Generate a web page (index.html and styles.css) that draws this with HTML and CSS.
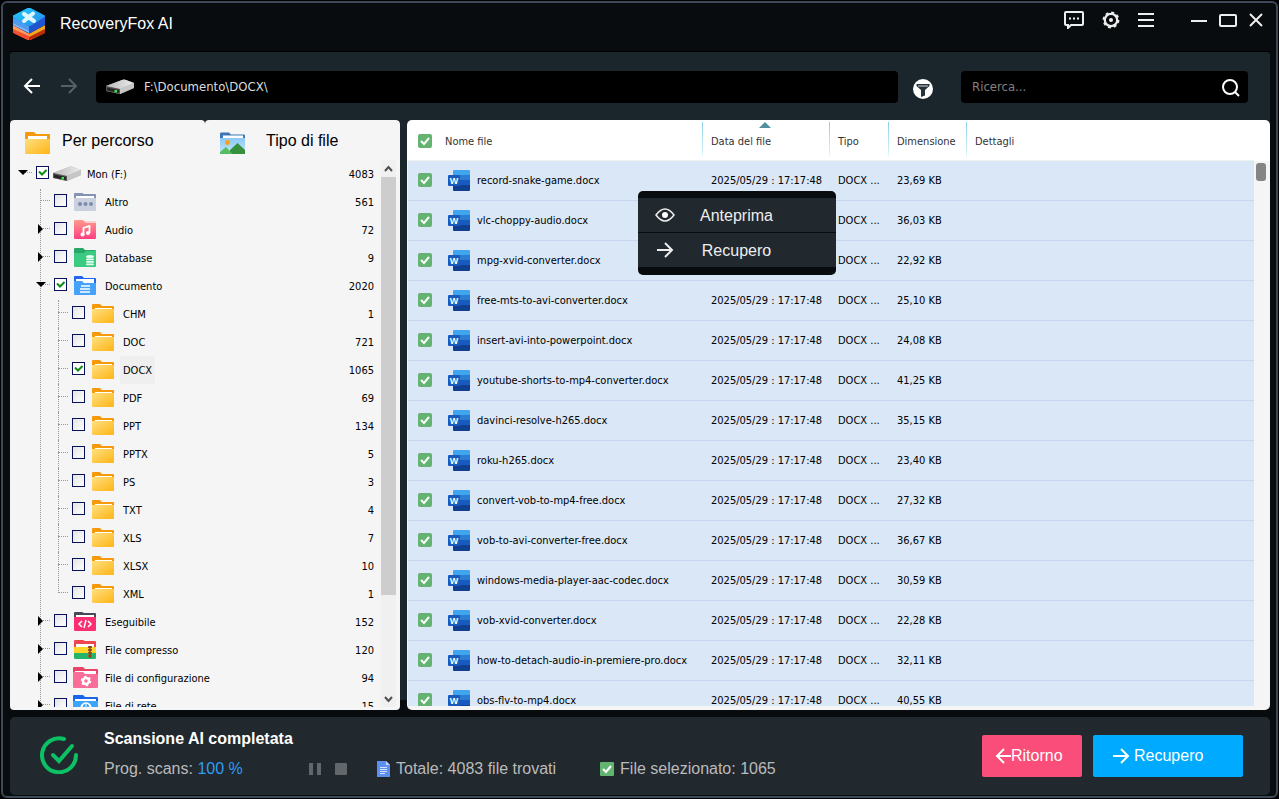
FILE: index.html
```
<!DOCTYPE html>
<html lang="it">
<head>
    <meta charset="UTF-8">
    <title>RecoveryFox AI</title>
    <link rel="stylesheet" href="styles.css">
</head>
<body>
    <svg class="sprite" aria-hidden="true">
        <defs>
            <linearGradient id="gold" x1="0" y1="0" x2="1" y2="1">
                <stop offset="0" stop-color="#ffdf80"/>
                <stop offset="1" stop-color="#fdb515"/>
            </linearGradient>
            <linearGradient id="pink" x1="0" y1="0" x2="0" y2="1">
                <stop offset="0" stop-color="#ff9a8b"/>
                <stop offset="1" stop-color="#ff3f84"/>
            </linearGradient>
            <linearGradient id="sky" x1="0" y1="0" x2="0" y2="1">
                <stop offset="0" stop-color="#8cc8f5"/>
                <stop offset="1" stop-color="#c4e8fb"/>
            </linearGradient>
            <linearGradient id="metal" x1="0" y1="0" x2="1" y2="0">
                <stop offset="0" stop-color="#b9b9b9"/>
                <stop offset="1" stop-color="#ececec"/>
            </linearGradient>
            <linearGradient id="cyan" x1="0" y1="0" x2="1" y2="1">
                <stop offset="0" stop-color="#1fd0ff"/>
                <stop offset="1" stop-color="#2a86e8"/>
            </linearGradient>
        </defs>
        <symbol id="folder" viewBox="0 0 22 20">
            <path d="M0 2Q0 1 1 1h7l2 2h11q1 0 1 1v4H0z" fill="#f59a0b"/>
            <path d="M3 5h17v3H3z" fill="#fff"/>
            <path d="M0 6h22v13q0 1-1 1H1q-1 0-1-1z" fill="url(#gold)"/>
        </symbol>
        <symbol id="folder-other" viewBox="0 0 22 20">
            <path d="M0 3Q0 2 1 2h7l2 1h11q1 0 1 1v4H0z" fill="#8492b4"/>
            <path d="M2 5h18v3H2z" fill="#fff"/>
            <path d="M0 7h22v12q0 1-1 1H1q-1 0-1-1z" fill="#cbd0df"/>
            <g fill="#7d8bb0"><circle cx="6" cy="13" r="2"/><circle cx="11.500" cy="13" r="2"/><circle cx="17" cy="13" r="2"/></g>
        </symbol>
        <symbol id="folder-audio" viewBox="0 0 22 20">
            <path d="M10 2h11q1 0 1 1v4H10z" fill="#ffd0cf"/>
            <path d="M0 2Q0 1 1 1h8l3 3h10v15q0 1-1 1H1q-1 0-1-1z" fill="url(#pink)"/>
            <path d="M9.500 16V9l6-2v7" fill="none" stroke="#fff" stroke-width="1.800"/>
            <circle cx="8.500" cy="15.500" r="2" fill="#fff"/><circle cx="14" cy="14" r="2" fill="#fff"/>
        </symbol>
        <symbol id="folder-database" viewBox="0 0 22 20">
            <path d="M0 2Q0 1 1 1h8l2 2h10q1 0 1 1v5H0z" fill="#27a768"/>
            <path d="M0 6h10l2-2h10v15q0 1-1 1H1q-1 0-1-1z" fill="#3bca82"/>
            <g fill="#e9fff3"><ellipse cx="16" cy="9.500" rx="4" ry="1.600"/><rect x="12" y="11.500" width="8" height="1.700" rx="1"/><rect x="12" y="14" width="8" height="1.700" rx="1"/><rect x="12" y="16.500" width="8" height="1.700" rx="1"/></g>
        </symbol>
        <symbol id="folder-document" viewBox="0 0 22 20">
            <path d="M0 2Q0 1 1 1h7l2 2h11q1 0 1 1v5H0z" fill="#2166f2"/>
            <path d="M2 4h18v4H2z" fill="#fff"/>
            <path d="M0 6h8l2 2h12v11q0 1-1 1H1q-1 0-1-1z" fill="#45a2fc"/>
            <path d="M7 11h9M6 14h10M6 17h10" stroke="#fff" stroke-width="1.500"/>
        </symbol>
        <symbol id="folder-exe" viewBox="0 0 22 20">
            <path d="M0 2Q0 1 1 1h7l2 1h11q1 0 1 1v5H0z" fill="#454a58"/>
            <path d="M2 4h18v4H2z" fill="#fff"/>
            <path d="M0 6h22v13q0 1-1 1H1q-1 0-1-1z" fill="#fb2f72"/>
            <path d="M8 10l-3 3 3 3M14 10l3 3-3 3M12 9l-2 8" fill="none" stroke="#fff" stroke-width="1.500"/>
        </symbol>
        <symbol id="folder-zip" viewBox="0 0 22 20">
            <path d="M0 2Q0 1 1 1h8l2 1h10q1 0 1 1v5H0z" fill="#f0444e"/>
            <path d="M2 5h18v4H2z" fill="#fff"/>
            <path d="M0 8h22v6H0z" fill="#ffd52b"/>
            <path d="M0 14h22v5q0 1-1 1H1q-1 0-1-1z" fill="#27b36b"/>
            <path d="M16 7v12" stroke="#a45a25" stroke-width="4" stroke-dasharray="2 1"/>
            <path d="M16 7v12" stroke="#7b4520" stroke-width="1.500"/>
        </symbol>
        <symbol id="folder-config" viewBox="0 0 25 22">
            <path d="M0 2Q0 1 1 1h9l2 2h12q1 0 1 1v5H0z" fill="#e94369"/>
            <path d="M2 5h21v5H2z" fill="#fff"/>
            <path d="M0 6h10l2 2h13v13q0 1-1 1H1q-1 0-1-1z" fill="#fa6d98"/>
            <circle cx="13" cy="15" r="3" fill="none" stroke="#fff" stroke-width="2.500"/>
            <circle cx="13" cy="15" r="4.500" fill="none" stroke="#fff" stroke-width="1.500" stroke-dasharray="2.300 2.400"/>
        </symbol>
        <symbol id="folder-net" viewBox="0 0 25 22">
            <path d="M0 2Q0 1 1 1h9l2 2h12q1 0 1 1v5H0z" fill="#1765e9"/>
            <path d="M2 5h21v4H2z" fill="#fff"/>
            <path d="M0 7h25v14q0 1-1 1H1q-1 0-1-1z" fill="#3aa5fb"/>
            <circle cx="13" cy="14" r="5" fill="none" stroke="#fff" stroke-width="1.500"/>
            <path d="M8 14h10M13 9v10M10 10q-2 4 0 8M16 10q2 4 0 8" fill="none" stroke="#fff"/>
        </symbol>
        <symbol id="folder-image" viewBox="0 0 25 22">
            <path d="M0 1.500Q0 .500 1 .500h8l2 2h13q1 0 1 1v4H0z" fill="#3d78b4"/>
            <path d="M3 3.500h20v3H3z" fill="#fff"/>
            <path d="M0 6h25v15q0 1-1 1H1q-1 0-1-1z" fill="url(#sky)"/>
            <path d="M10 18l7.500-7L25 18v4H10z" fill="#36903e"/>
            <path d="M0 20l6-5 6.500 7H0z" fill="#58bd60"/>
            <circle cx="7.500" cy="10.500" r="2.500" fill="#fba11b"/>
        </symbol>
        <symbol id="drive" viewBox="0 0 30 16">
            <path d="M1 7L17 1q2-1 4 0l8 3v5l-14 6L1 12z" fill="#a5a5a5"/>
            <path d="M1 7L17 1q2-1 4 0l8 3-14 6z" fill="url(#metal)"/>
            <path d="M15 10l14-6v5l-14 6z" fill="#c6c6c6"/>
            <path d="M1 7l14 3v5L1 12z" fill="#555"/>
            <path d="M2 8.500l12 2.500v3L2 11.500z" fill="#262626"/>
            <path d="M9.500 11h2.500v2.500H9.500z" fill="#3ce54b"/>
        </symbol>
        <symbol id="word" viewBox="0 0 22 21">
            <path d="M5 1q0-1 1-1h15q1 0 1 1v5H5z" fill="#41a5ee"/>
            <path d="M5 5h17v6H5z" fill="#2b7cd3"/>
            <path d="M5 10h17v6H5z" fill="#185abd"/>
            <path d="M5 15h17v5q0 1-1 1H6q-1 0-1-1z" fill="#103f91"/>
            <rect y="5" width="12" height="11" rx="1" fill="#185abd"/>
            <text x="6" y="14" class="word-letter">W</text>
        </symbol>
        <symbol id="arrow-left" viewBox="0 0 18 18">
            <path d="M17 9H2M9 2L2 9l7 7" fill="none" stroke="currentColor" stroke-width="2"/>
        </symbol>
        <symbol id="arrow-right" viewBox="0 0 18 18">
            <path d="M1 9h15M9 2l7 7-7 7" fill="none" stroke="currentColor" stroke-width="2"/>
        </symbol>
    </svg>

    <div class="window">
        <header class="titlebar">
            <svg class="logo" viewBox="0 0 32 32">
                <path d="M0 18l16 7 16-7v6q0 1-1 1.500L17.500 32h-3L1 25.500Q0 25 0 24z" fill="#f4502e"/>
                <path d="M16 25l16-7v6q0 1-1 1.500L17.500 32H16z" fill="#b92d08"/>
                <path d="M0 17l16 9v2L0 21z" fill="#ff9d62"/>
                <path d="M16 26l16-9v4l-16 8z" fill="#f4a81f"/>
                <path d="M0 8l16 8 16-8v8q0 1-1 1.500L17.500 25h-3L1 17.500Q0 17 0 16z" fill="#1f55cf"/>
                <path d="M0 9l16 9v5L0 15z" fill="#4e9bf2"/>
                <path d="M0 15l16 8v2L1 17.500Q0 17 0 16z" fill="#86bdf8"/>
                <path d="M14.500 0h3L31 7q1 .500 1 1t-1 1.500L17.500 18h-3L1 9.500Q0 9 0 8t1-1z" fill="url(#cyan)"/>
                <path d="M11 6l10 7M20 5.500L11 13" stroke="#dff6ff" stroke-width="4" stroke-linecap="round"/>
            </svg>
            <h1>RecoveryFox AI</h1>
            <div class="tools">
                <button aria-label="Messaggi"><svg width="20" height="18" viewBox="0 0 20 18"><path d="M2 1h16q1 0 1 1v11q0 1-1 1H7l-3 3v-3H2q-1 0-1-1V2q0-1 1-1z" fill="none" stroke="#eee" stroke-width="2"/><path d="M5 7.500h2M9 7.500h2M13 7.500h2" stroke="#eee" stroke-width="2"/></svg></button>
                <button aria-label="Impostazioni"><svg width="18" height="18" viewBox="0 0 18 18"><circle cx="9" cy="9" r="6.200" fill="none" stroke="#eee" stroke-width="2.200"/><circle cx="9" cy="9" r="7.600" fill="none" stroke="#eee" stroke-width="1.600" stroke-dasharray="3 2.970"/><circle cx="9" cy="9" r="2" fill="#eee"/></svg></button>
                <button aria-label="Menu"><svg width="16" height="14" viewBox="0 0 16 14"><path d="M0 1h16M0 7h16M0 13h16" stroke="#eee" stroke-width="2"/></svg></button>
            </div>
            <div class="controls">
                <button aria-label="Riduci"><svg width="16" height="14" viewBox="0 0 16 14"><path d="M0 8h16" stroke="#eee" stroke-width="2"/></svg></button>
                <button aria-label="Ingrandisci"><svg width="18" height="14" viewBox="0 0 18 14"><rect x="1" y="2" width="16" height="11" rx="1" fill="none" stroke="#eee" stroke-width="2"/></svg></button>
                <button aria-label="Chiudi"><svg width="14" height="14" viewBox="0 0 14 14"><path d="M1 1l12 12M13 1L1 13" stroke="#eee" stroke-width="2"/></svg></button>
            </div>
        </header>

        <main class="workspace">
            <div class="toolbar">
                <button class="nav" aria-label="Indietro"><svg width="18" height="18"><use href="#arrow-left"/></svg></button>
                <button class="nav" aria-label="Avanti" disabled><svg width="18" height="18"><use href="#arrow-right"/></svg></button>
                <label class="field path">
                    <svg width="30" height="16"><use href="#drive"/></svg>
                    <input type="text" value="F:\Documento\DOCX\" aria-label="Percorso">
                </label>
                <button class="filter" aria-label="Filtro"><svg width="20" height="20" viewBox="0 0 20 20"><circle cx="10" cy="10" r="10" fill="#fff"/><path d="M3.500 5h13v2l-4.500 4v5.500L8 18v-7L3.500 7z" fill="#26323a"/><path d="M5 7h10" stroke="#fff" stroke-width=".800"/></svg></button>
                <div class="field search">
                    <input type="text" placeholder="Ricerca..." aria-label="Ricerca">
                    <button aria-label="Cerca"><svg width="20" height="20" viewBox="0 0 20 20"><circle cx="9" cy="10" r="7" fill="none" stroke="#fff" stroke-width="2"/><path d="M14 15l4 4" stroke="#fff" stroke-width="2"/></svg></button>
                </div>
            </div>

            <div class="panels">
                <aside class="sidebar">
                    <div class="tabs">
                        <button><svg width="25" height="22" viewBox="0 0 25 22"><path d="M0 1Q0 0 1 0h8l2 2h13q1 0 1 1v5H0z" fill="#f59a0b"/><path d="M3 4h19v3H3z" fill="#fff"/><path d="M0 7h25v14q0 1-1 1H1q-1 0-1-1z" fill="url(#gold)"/></svg>Per percorso</button>
                        <button class="by-type"><svg width="25" height="22"><use href="#folder-image"/></svg>Tipo di file</button>
                    </div>
                    <div class="tree-wrap">
                        <ul class="tree">
                            <li class="root"><i class="open"></i><label><input type="checkbox" checked><svg class="disk"><use href="#drive"/></svg><span>Mon (F:)</span></label><b>4083</b></li>
                            <li><label><input type="checkbox"><svg><use href="#folder-other"/></svg><span>Altro</span></label><b>561</b></li>
                            <li><i></i><label><input type="checkbox"><svg><use href="#folder-audio"/></svg><span>Audio</span></label><b>72</b></li>
                            <li><i></i><label><input type="checkbox"><svg><use href="#folder-database"/></svg><span>Database</span></label><b>9</b></li>
                            <li><i class="open"></i><label><input type="checkbox" checked><svg><use href="#folder-document"/></svg><span>Documento</span></label><b>2020</b></li>
                            <li class="sub"><label><input type="checkbox"><svg><use href="#folder"/></svg><span>CHM</span></label><b>1</b></li>
                            <li class="sub"><label><input type="checkbox"><svg><use href="#folder"/></svg><span>DOC</span></label><b>721</b></li>
                            <li class="sub current"><label><input type="checkbox" checked><svg><use href="#folder"/></svg><span>DOCX</span></label><b>1065</b></li>
                            <li class="sub"><label><input type="checkbox"><svg><use href="#folder"/></svg><span>PDF</span></label><b>69</b></li>
                            <li class="sub"><label><input type="checkbox"><svg><use href="#folder"/></svg><span>PPT</span></label><b>134</b></li>
                            <li class="sub"><label><input type="checkbox"><svg><use href="#folder"/></svg><span>PPTX</span></label><b>5</b></li>
                            <li class="sub"><label><input type="checkbox"><svg><use href="#folder"/></svg><span>PS</span></label><b>3</b></li>
                            <li class="sub"><label><input type="checkbox"><svg><use href="#folder"/></svg><span>TXT</span></label><b>4</b></li>
                            <li class="sub"><label><input type="checkbox"><svg><use href="#folder"/></svg><span>XLS</span></label><b>7</b></li>
                            <li class="sub"><label><input type="checkbox"><svg><use href="#folder"/></svg><span>XLSX</span></label><b>10</b></li>
                            <li class="sub last"><label><input type="checkbox"><svg><use href="#folder"/></svg><span>XML</span></label><b>1</b></li>
                            <li><i></i><label><input type="checkbox"><svg><use href="#folder-exe"/></svg><span>Eseguibile</span></label><b>152</b></li>
                            <li><i></i><label><input type="checkbox"><svg><use href="#folder-zip"/></svg><span>File compresso</span></label><b>120</b></li>
                            <li><i></i><label><input type="checkbox"><svg class="big"><use href="#folder-config"/></svg><span>File di configurazione</span></label><b>94</b></li>
                            <li><i></i><label><input type="checkbox"><svg class="big"><use href="#folder-net"/></svg><span>File di rete</span></label><b>15</b></li>
                        </ul>
                        <div class="scrollbar">
                            <svg width="15" height="17" viewBox="0 0 15 17"><path d="M4 11l3.500-4 3.500 4" fill="none" stroke="#505050" stroke-width="2"/></svg>
                            <div class="thumb"></div>
                            <svg width="15" height="17" viewBox="0 0 15 17"><path d="M4 7l3.500 4L11 7" fill="none" stroke="#505050" stroke-width="2"/></svg>
                        </div>
                    </div>
                </aside>

                <section class="files">
                    <div class="files-view">
                        <table>
                            <colgroup><col class="c-check"><col class="c-name"><col class="c-date"><col class="c-type"><col class="c-size"><col></colgroup>
                            <thead>
                                <tr><th><input type="checkbox" checked aria-label="Seleziona tutto"></th><th>Nome file</th><th class="sorted">Data del file</th><th>Tipo</th><th>Dimensione</th><th>Dettagli</th></tr>
                            </thead>
                            <tbody id="rows"></tbody>
                        </table>
                        <div class="rail"><div class="thumb"></div></div>
                    </div>
                    <div class="context-menu">
                        <button><svg width="20" height="14" viewBox="0 0 20 14"><path d="M1 7q9-12 18 0q-9 12-18 0z" fill="none" stroke="#eee" stroke-width="1.500"/><circle cx="10" cy="7" r="3" fill="#fff"/></svg><span>Anteprima</span></button>
                        <button><svg width="18" height="18"><use href="#arrow-right"/></svg><span>Recupero</span></button>
                    </div>
                </section>
            </div>
        </main>

        <footer class="status">
            <svg class="done" width="38" height="38" viewBox="0 0 38 38" fill="none" stroke="#0cc164" stroke-width="4" stroke-linecap="round"><path d="M24 3A17 17 0 1 0 36 19"/><path d="M13 19l6 6L32 10"/></svg>
            <div class="report">
                <strong>Scansione AI completata</strong>
                <div class="facts">
                    <span class="progress">Prog. scans: <em>100 %</em></span>
                    <button class="pause" aria-label="Pausa"></button>
                    <button class="stop" aria-label="Ferma"></button>
                    <span class="total"><svg width="13" height="16" viewBox="0 0 13 16"><path d="M0 0h9l4 4v12H0z" fill="#5c8ff0"/><path d="M9 0l4 4H9z" fill="#c3d7fb"/><path d="M3 6.500h7M3 8.500h7M3 10.500h7M3 12.500h5" stroke="#d5e2fb"/></svg>Totale: 4083 file trovati</span>
                    <span class="chosen"><svg width="14" height="14" viewBox="0 0 14 14"><rect width="14" height="14" rx="1" fill="#63b471"/><path d="M3 7l3 3 5-6" fill="none" stroke="#fff" stroke-width="2"/></svg>File selezionato: 1065</span>
                </div>
            </div>
            <div class="actions">
                <button class="back"><svg width="16" height="18" viewBox="0 0 16 18"><path d="M16 9H2M9 2L2 9l7 7" fill="none" stroke="currentColor" stroke-width="2"/></svg>Ritorno</button>
                <button class="recover"><svg width="18" height="18"><use href="#arrow-right"/></svg>Recupero</button>
            </div>
        </footer>
    </div>

    <script src="script.js"></script>
</body>
</html>
```
FILE: styles.css
```
* {
    box-sizing: border-box;
}
body {
    height: 100vh;
    margin: 0;
    padding: 1px;
    background-color: #000;
    font-family: "Liberation Sans", Arial, sans-serif;
    font-size: 16px;
    overflow: hidden;
}
button {
    padding: 0;
    border: 0;
    background: none;
    color: inherit;
    font: inherit;
    cursor: pointer;
}
svg {
    display: block;
    flex: none;
}
.sprite {
    position: absolute;
    width: 0;
    height: 0;
}
.word-letter {
    fill: #fff;
    font: bold 9px "Liberation Sans", Arial, sans-serif;
    text-anchor: middle;
}
.window {
    display: flex;
    flex-direction: column;
    height: 100%;
    padding: 0 6px 1px 7px;
    border: 2px solid #3d4859;
    border-radius: 6px;
    background-color: #080c0f;
}

/* title bar */
.titlebar {
    display: flex;
    align-items: flex-start;
    height: 49px;
    padding: 5px 7px 0 3px;
    border-bottom: 1px solid #000;
    color: #fff;
}
.logo {
    width: 32px;
    height: 32px;
}
.titlebar h1 {
    margin: 0 auto 0 15px;
    font-size: 16px;
    line-height: 32px;
    font-weight: normal;
}
.tools,
.controls {
    display: flex;
    align-items: center;
    height: 24px;
}
.tools {
    gap: 18px;
}
.controls {
    margin-left: 37px;
    gap: 12px;
}

/* toolbar */
.workspace {
    display: flex;
    flex-direction: column;
    flex: 1;
    min-height: 0;
    background: linear-gradient(#1a252c calc(100% - 10px), #080c0f 0);
    border-radius: 4px 4px 0 0;
}
.toolbar {
    display: flex;
    align-items: center;
    height: 68px;
    padding: 2px 22px 0 13px;
}
.nav {
    margin: 0 19px 2px 0;
    color: #fff;
}
.nav:disabled {
    margin-right: 18px;
    color: #566067;
}
.field {
    display: flex;
    align-items: center;
    height: 32px;
    border-radius: 4px;
    background-color: #000;
}
.field input {
    flex: 1;
    min-width: 0;
    padding: 0 0 2px;
    border: 0;
    outline: 0;
    background: none;
    color: #ddd;
    font: 13px "DejaVu Sans Condensed", Tahoma, sans-serif;
}
.path {
    flex: 1;
    padding-left: 9px;
    gap: 9px;
}
.filter {
    margin: 4px 28px 0 15px;
}
.search {
    width: 287px;
    padding: 0 7px 0 11px;
}
.field input::placeholder {
    color: #808080;
}

/* left panel */
.panels {
    display: flex;
    flex: 1;
    min-height: 0;
    gap: 7px;
}
.sidebar {
    display: flex;
    flex-direction: column;
    width: 390px;
    border-radius: 4px;
    overflow: hidden;
}
.tabs {
    display: flex;
}
.tabs button {
    display: flex;
    flex: 1;
    align-items: center;
    height: 40px;
    padding: 2px 0 0 15px;
    gap: 12px;
    border-radius: 4px 4px 0 0;
    background-color: #f5f5f5;
}
.tabs .by-type {
    gap: 21px;
}
.tabs svg {
    margin-top: 3px;
}
.tree-wrap {
    display: flex;
    flex: 1;
    min-height: 0;
    padding: 0 4px 3px 0;
    background-color: #f5f5f5;
}
.tree {
    position: relative;
    flex: 1;
    margin: 0;
    padding: 0;
    overflow: hidden;
    list-style: none;
    font: 11px "DejaVu Sans Condensed", Tahoma, sans-serif;
}
/* dotted branch lines */
.tree::before {
    content: "";
    position: absolute;
    left: 30px;
    top: 29px;
    bottom: 0;
    border-left: 1px dotted #999;
}
.tree li {
    display: flex;
    position: relative;
    align-items: center;
    height: 28px;
    padding: 0 7px 0 44px;
}
.tree li::before {
    content: "";
    position: absolute;
    left: 30px;
    top: 12px;
    width: 10px;
    border-top: 1px dotted #999;
}
.tree .root {
    padding-left: 26px;
}
.tree .root::before {
    left: 12px;
}
.tree .sub {
    padding-left: 62px;
}
.tree .sub::before {
    left: 48px;
}
.tree .sub::after {
    content: "";
    position: absolute;
    left: 48px;
    top: 0;
    bottom: 0;
    border-left: 1px dotted #999;
}
.tree .last::after {
    bottom: 15px;
}
.tree i {
    position: absolute;
    left: 28px;
    top: 8px;
    z-index: 1;
    border: 5px solid transparent;
    border-left-color: #000;
    border-right-width: 0;
}
.tree i.open {
    left: 26px;
    top: 10px;
    border-color: #000 transparent transparent;
    border-width: 5px 5px 0;
}
.tree .root i {
    left: 8px;
}
.tree label {
    display: flex;
    flex: 1;
    align-items: center;
}
.tree input {
    appearance: none;
    width: 13px;
    height: 13px;
    margin: 0 7px 3px 0;
    border: 1px solid #06105e;
    background: linear-gradient(135deg, #e4e4e4, #fff);
}
.tree input:checked {
    background: #fff url("data:image/svg+xml,%3Csvg xmlns='http://www.w3.org/2000/svg' viewBox='0 0 11 11'%3E%3Cpath d='M2 4.500l3 3L9.500 3' fill='none' stroke='%230d8c12' stroke-width='2'/%3E%3C/svg%3E");
}
.tree svg {
    width: 22px;
    height: 20px;
    margin: 0 6px 2px 0;
}
.tree svg.big {
    width: 25px;
    height: 22px;
    margin: 0 4px 2px -1px;
}
.tree svg.disk {
    width: 30px;
    height: 16px;
    margin: 0 2px 0 -4px;
}
.tree span {
    padding: 2px 3px 0;
    line-height: 26px;
}
.tree .current span {
    background-color: #efefef;
}
.tree b {
    font-weight: normal;
}
.scrollbar {
    display: flex;
    flex-direction: column;
    width: 15px;
    background-color: #f0f0f0;
}
.scrollbar .thumb {
    height: 418px;
    margin-bottom: auto;
    background-color: #cdcdcd;
}

/* file list */
.files {
    display: flex;
    position: relative;
    flex: 1;
    padding: 0 0 4px 1px;
    border-radius: 5px;
    background: linear-gradient(#fff 41px, #f5f5f5 0);
    font: 11px "DejaVu Sans Condensed", Tahoma, sans-serif;
}
.files-view {
    display: flex;
    flex: 1;
    align-items: flex-start;
    overflow: hidden;
}
table {
    flex: 1;
    width: 100%;
    border-collapse: separate;
    border-spacing: 0;
    table-layout: fixed;
}
.c-check {
    width: 28px;
}
.c-name {
    width: 266px;
}
.c-date {
    width: 127px;
}
.c-type {
    width: 59px;
}
.c-size {
    width: 78px;
}
th,
td {
    padding: 0 0 0 9px;
    text-align: left;
    white-space: nowrap;
}
th {
    position: relative;
    height: 41px;
    padding-top: 2px;
    border-bottom: 1px solid #f0f0f0;
    color: #333;
    font-weight: normal;
}
th + th + th::before {
    content: "";
    position: absolute;
    left: 0;
    top: 2px;
    bottom: 2px;
    width: 1px;
    background: linear-gradient(#8ad0e8, #d5f0fa 85%, #fff);
}
.sorted::after {
    content: "";
    position: absolute;
    left: 57px;
    top: 2px;
    border: 6px solid transparent;
    border-top: 0;
    border-bottom-color: #528fa0;
}
td {
    height: 40px;
    border-bottom: 1px solid #c5d6ee;
    background-color: #dae7f7;
}
td:first-child {
    padding-bottom: 2px;
}
td svg {
    width: 22px;
    height: 21px;
}
.name {
    display: flex;
    align-items: center;
    padding-left: 3px;
    gap: 7px;
}
.files input {
    display: block;
    appearance: none;
    width: 14px;
    height: 14px;
    margin: 0 1px;
    border-radius: 2px;
    background: #63b471 url("data:image/svg+xml,%3Csvg xmlns='http://www.w3.org/2000/svg' viewBox='0 0 14 14'%3E%3Cpath d='M3 7l3 3 5-6' fill='none' stroke='%23fff' stroke-width='2'/%3E%3C/svg%3E");
}
.rail {
    width: 16px;
    padding: 43px 0 0 2px;
}
.rail .thumb {
    width: 10px;
    height: 18px;
    border-radius: 3px;
    background-color: #858585;
}
.context-menu {
    position: absolute;
    left: 231px;
    top: 71px;
    width: 198px;
    padding: 7px 0 8px;
    border-radius: 5px;
    background-color: #080c0f;
    color: #eee;
    font: 16px "Liberation Sans", Arial, sans-serif;
}
.context-menu button {
    display: flex;
    align-items: center;
    width: 100%;
    height: 34px;
    padding-left: 17px;
    background-color: #21282e;
}
.context-menu button + button {
    margin-top: 1px;
}
.context-menu span {
    flex: 1;
    padding: 2px 38px 0 0;
    text-align: center;
}
.context-menu svg {
    width: 20px;
}

/* footer */
.status {
    display: flex;
    align-items: center;
    height: 78px;
    margin-top: 7px;
    padding: 0 27px 0 30px;
    border-radius: 5px;
    background-color: #21282e;
}
.done {
    margin-bottom: 2px;
}
.report {
    flex: 1;
    margin: 0 0 4px 26px;
    color: #bbb;
}
.report strong {
    display: block;
    color: #fff;
    line-height: 20px;
}
.facts {
    display: flex;
    align-items: center;
    height: 20px;
    margin-top: 10px;
}
.progress {
    width: 205px;
}
.progress em {
    color: #2f9df0;
    font-style: normal;
}
.pause {
    width: 12px;
    height: 12px;
    border: solid #62676b;
    border-width: 0 4px;
}
.stop {
    width: 12px;
    height: 12px;
    margin-left: 14px;
    border-radius: 1px;
    background-color: #62676b;
}
.total,
.chosen {
    display: flex;
    align-items: center;
    gap: 6px;
}
.total {
    margin-left: 30px;
}
.chosen {
    margin-left: 44px;
}
.actions {
    display: flex;
    gap: 11px;
    color: #fff;
}
.actions button {
    display: flex;
    align-items: center;
    height: 42px;
    border-radius: 2px;
}
.back {
    width: 100px;
    padding-left: 13px;
    background-color: #fa4d79;
}
.recover {
    width: 150px;
    padding-left: 19px;
    gap: 4px;
    background-color: #00abff;
}
```
FILE: script.js
```
const files = [
    ['record-snake-game.docx', '23,69 KB'],
    ['vlc-choppy-audio.docx', '36,03 KB'],
    ['mpg-xvid-converter.docx', '22,92 KB'],
    ['free-mts-to-avi-converter.docx', '25,10 KB'],
    ['insert-avi-into-powerpoint.docx', '24,08 KB'],
    ['youtube-shorts-to-mp4-converter.docx', '41,25 KB'],
    ['davinci-resolve-h265.docx', '35,15 KB'],
    ['roku-h265.docx', '23,40 KB'],
    ['convert-vob-to-mp4-free.docx', '27,32 KB'],
    ['vob-to-avi-converter-free.docx', '36,67 KB'],
    ['windows-media-player-aac-codec.docx', '30,59 KB'],
    ['vob-xvid-converter.docx', '22,28 KB'],
    ['how-to-detach-audio-in-premiere-pro.docx', '32,11 KB'],
    ['obs-flv-to-mp4.docx', '40,55 KB']
];

document.getElementById('rows').innerHTML = files.map(([name, size]) => `
    <tr>
        <td><input type="checkbox" checked aria-label="${name}"></td>
        <td><div class="name"><svg><use href="#word"/></svg>${name}</div></td>
        <td>2025/05/29 : 17:17:48</td>
        <td>DOCX ...</td>
        <td>${size}</td>
        <td></td>
    </tr>`).join('');
```
